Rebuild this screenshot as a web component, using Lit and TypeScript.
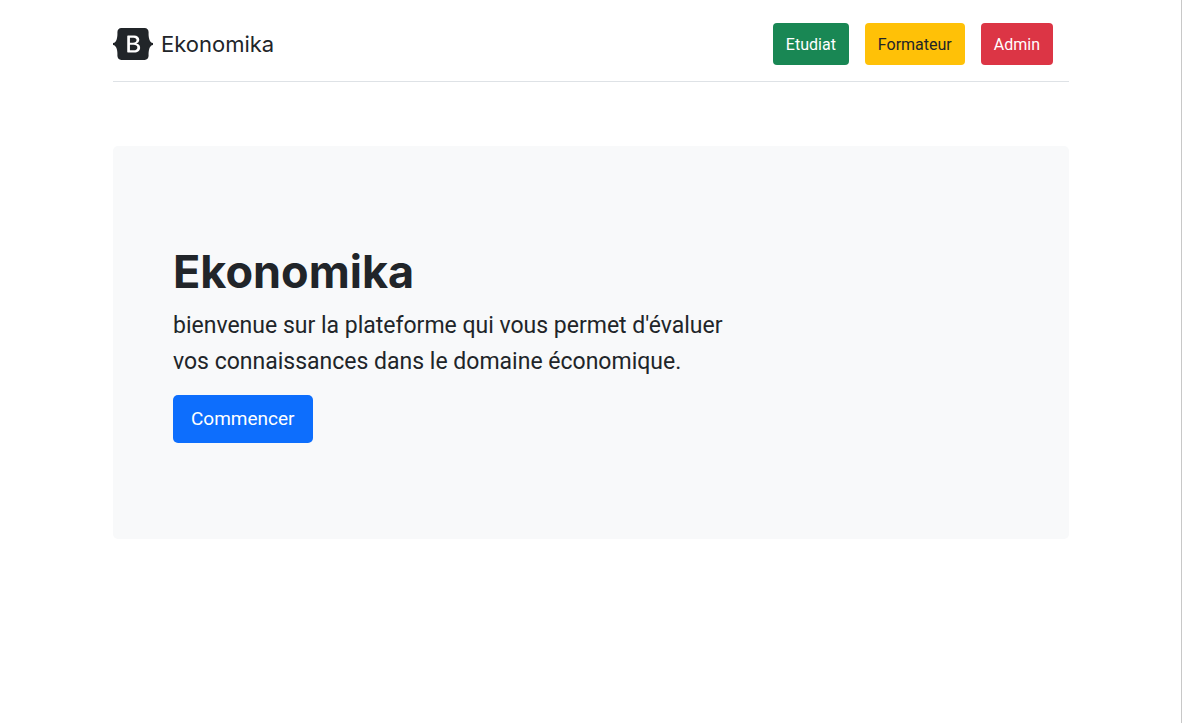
import { LitElement, html, css } from "lit";
import { customElement } from "lit/decorators.js";

@customElement("app-root")
export class AppRoot extends LitElement {
  static styles = css`
    :host {
      display: block;
      box-sizing: border-box;
      min-height: 100vh;
      border-right: 1px solid #c8c8c8;
      background: #fff;
      color: #212529;
      font-family: Roboto, Inter, "Liberation Sans", sans-serif;
      font-size: 16px;
      line-height: 24px;
    }
    *, *::before, *::after { box-sizing: border-box; }
    .page { padding: 0 112px 0 113px; }
    .header {
      display: flex;
      align-items: center;
      justify-content: space-between;
      padding: 23px 16px 16px 0;
      border-bottom: 1px solid #dee2e6;
      margin-bottom: 64px;
    }
    .brand {
      display: flex;
      align-items: center;
      gap: 8px;
      color: inherit;
      text-decoration: none;
      font-family: Inter, "Liberation Sans", sans-serif;
      font-size: 22px;
      line-height: 32px;
    }
    .brand svg { display: block; }
    .nav { display: flex; gap: 16px; }
    .btn {
      display: inline-block;
      border: 0;
      border-radius: 4px;
      font: inherit;
      color: #fff;
      text-decoration: none;
      cursor: pointer;
    }
    .small { padding: 10px 13px 8px; }
    .success { background: #198754; }
    .warning { background: #ffc107; color: #212529; }
    .danger { background: #dc3545; }
    .hero {
      background: #f8f9fa;
      border-radius: 5px;
      padding: 96px 60px;
    }
    h1 {
      margin: 0 0 7px;
      font-family: Inter, "Liberation Sans", sans-serif;
      font-size: 45px;
      line-height: 59px;
      font-weight: 700;
    }
    .lead {
      max-width: 558px;
      margin: 0 0 15px;
      font-size: 23px;
      line-height: 36px;
    }
    .large {
      padding: 9px 18px;
      border-radius: 5px;
      font-size: 19px;
      line-height: 30px;
      background: #0d6efd;
    }
  `;

  render() {
    return html`
      <div class="page">
        <header class="header">
          <a class="brand" href="#">
            <svg width="40" height="32" viewBox="0 0 118 94" aria-hidden="true">
              <path fill="#212529" fill-rule="evenodd" clip-rule="evenodd" d="M24.509 0c-6.733 0-11.715 5.893-11.492 12.284.214 6.14-.064 14.092-2.066 20.577C8.943 39.365 5.547 43.485 0 44.014v5.972c5.547.529 8.943 4.649 10.951 11.153 2.002 6.485 2.28 14.437 2.066 20.577C12.794 88.106 17.776 94 24.51 94H93.5c6.733 0 11.714-5.893 11.491-12.284-.214-6.14.064-14.092 2.066-20.577 2.009-6.504 5.396-10.624 10.943-11.153v-5.972c-5.547-.529-8.934-4.649-10.943-11.153-2.002-6.484-2.28-14.437-2.066-20.577C105.214 5.894 100.233 0 93.5 0H24.508zM80 57.863C80 66.663 73.436 72 62.543 72H44a2 2 0 01-2-2V24a2 2 0 012-2h18.437c9.083 0 15.044 4.92 15.044 12.474 0 5.302-4.01 10.049-9.119 10.88v.277C75.317 46.394 80 51.21 80 57.863zM60.521 28.34H49.948v14.934h8.905c6.884 0 10.68-2.772 10.68-7.727 0-4.643-3.264-7.207-9.012-7.207zM49.948 49.2v16.458H60.91c7.167 0 10.964-2.876 10.964-8.281 0-5.406-3.903-8.178-11.425-8.178H49.948z"/>
            </svg>
            <span>Ekonomika</span>
          </a>
          <nav class="nav">
            <a class="btn small success" href="#">Etudiat</a>
            <a class="btn small warning" href="#">Formateur</a>
            <a class="btn small danger" href="#">Admin</a>
          </nav>
        </header>
        <main class="hero">
          <h1>Ekonomika</h1>
          <p class="lead">bienvenue sur la plateforme qui vous permet d'évaluer vos connaissances dans le domaine économique.</p>
          <button class="btn large" type="button">Commencer</button>
        </main>
      </div>
    `;
  }
}
